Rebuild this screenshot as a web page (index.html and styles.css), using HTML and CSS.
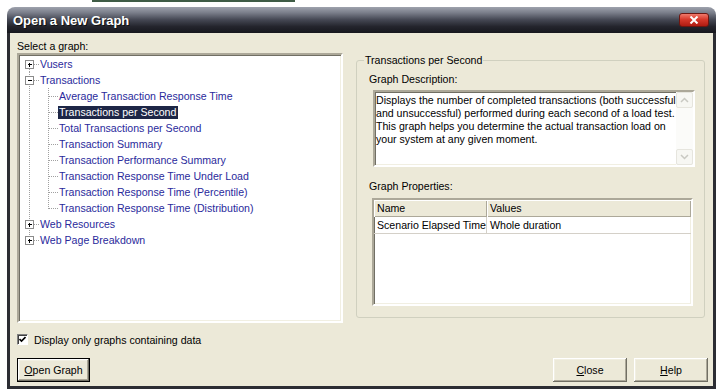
FILE: index.html
```html
<!DOCTYPE html>
<html>
<head>
<meta charset="utf-8">
<title>Open a New Graph</title>
<link rel="stylesheet" href="styles.css">
</head>
<body>
<svg class="defs" width="0" height="0" aria-hidden="true">
  <defs>
    <symbol id="pipe" viewBox="0 0 19 16"><line class="dl" x1="9.5" y1="0" x2="9.5" y2="16"/></symbol>
    <symbol id="tee" viewBox="0 0 19 16"><line class="dl" x1="9.5" y1="0" x2="9.5" y2="16"/><line class="dl" x1="10" y1="8.5" x2="19" y2="8.5"/></symbol>
    <symbol id="corner" viewBox="0 0 19 16"><line class="dl" x1="9.5" y1="0" x2="9.5" y2="9"/><line class="dl" x1="10" y1="8.5" x2="19" y2="8.5"/></symbol>
    <symbol id="first-plus" viewBox="0 0 19 16"><line class="dl" x1="9.5" y1="9" x2="9.5" y2="16"/><line class="dl" x1="10" y1="8.5" x2="19" y2="8.5"/><rect class="box" x="5.5" y="4.5" width="8" height="8"/><path class="sign" d="M7.5 8.5h4M9.5 6.5v4"/></symbol>
    <symbol id="tee-minus" viewBox="0 0 19 16"><line class="dl" x1="9.5" y1="0" x2="9.5" y2="16"/><line class="dl" x1="10" y1="8.5" x2="19" y2="8.5"/><rect class="box" x="5.5" y="4.5" width="8" height="8"/><path class="sign" d="M7.5 8.5h4"/></symbol>
    <symbol id="tee-plus" viewBox="0 0 19 16"><line class="dl" x1="9.5" y1="0" x2="9.5" y2="16"/><line class="dl" x1="10" y1="8.5" x2="19" y2="8.5"/><rect class="box" x="5.5" y="4.5" width="8" height="8"/><path class="sign" d="M7.5 8.5h4M9.5 6.5v4"/></symbol>
    <symbol id="corner-plus" viewBox="0 0 19 16"><line class="dl" x1="9.5" y1="0" x2="9.5" y2="9"/><line class="dl" x1="10" y1="8.5" x2="19" y2="8.5"/><rect class="box" x="5.5" y="4.5" width="8" height="8"/><path class="sign" d="M7.5 8.5h4M9.5 6.5v4"/></symbol>
  </defs>
</svg>
<div class="strip"><div class="strip-line"></div></div>
<div class="window">
  <div class="titlebar">
    <span class="title">Open a New Graph</span>
    <span class="close-x"><svg width="10" height="8" viewBox="0 0 10 8"><path d="M1.5 0.5l7 7M8.5 0.5l-7 7" stroke="#fff" stroke-width="2"/></svg></span>
  </div>
  <div class="client">
    <div class="main">
      <div class="left">
        <div class="lbl">Select a graph:</div>
        <div class="tree">
          <div class="row"><svg class="g"><use href="#first-plus"/></svg><span class="item">Vusers</span></div>
          <div class="row"><svg class="g"><use href="#tee-minus"/></svg><span class="item">Transactions</span></div>
          <div class="row"><svg class="g"><use href="#pipe"/></svg><svg class="g"><use href="#tee"/></svg><span class="item">Average Transaction Response Time</span></div>
          <div class="row"><svg class="g"><use href="#pipe"/></svg><svg class="g"><use href="#tee"/></svg><span class="item selected">Transactions per Second</span></div>
          <div class="row"><svg class="g"><use href="#pipe"/></svg><svg class="g"><use href="#tee"/></svg><span class="item">Total Transactions per Second</span></div>
          <div class="row"><svg class="g"><use href="#pipe"/></svg><svg class="g"><use href="#tee"/></svg><span class="item">Transaction Summary</span></div>
          <div class="row"><svg class="g"><use href="#pipe"/></svg><svg class="g"><use href="#tee"/></svg><span class="item">Transaction Performance Summary</span></div>
          <div class="row"><svg class="g"><use href="#pipe"/></svg><svg class="g"><use href="#tee"/></svg><span class="item">Transaction Response Time Under Load</span></div>
          <div class="row"><svg class="g"><use href="#pipe"/></svg><svg class="g"><use href="#tee"/></svg><span class="item">Transaction Response Time (Percentile)</span></div>
          <div class="row"><svg class="g"><use href="#pipe"/></svg><svg class="g"><use href="#corner"/></svg><span class="item">Transaction Response Time (Distribution)</span></div>
          <div class="row"><svg class="g"><use href="#tee-plus"/></svg><span class="item">Web Resources</span></div>
          <div class="row"><svg class="g"><use href="#corner-plus"/></svg><span class="item">Web Page Breakdown</span></div>
        </div>
      </div>
      <fieldset class="group">
        <legend>Transactions per Second</legend>
        <div class="group-body">
          <div class="lbl">Graph Description:</div>
          <div class="desc">
            <div class="desc-text">Displays the number of completed transactions (both successful<br>and unsuccessful) performed during each second of a load test.<br>This graph helps you determine the actual transaction load on<br>your system at any given moment.</div>
            <div class="vscroll">
              <span class="sbtn"><svg width="9" height="6" viewBox="0 0 9 6"><path d="M1 5l3.5-3.5L8 5" fill="none" stroke="#c9c9c2" stroke-width="1.5"/></svg></span>
              <span class="sbtn"><svg width="9" height="6" viewBox="0 0 9 6"><path d="M1 1l3.5 3.5L8 1" fill="none" stroke="#c9c9c2" stroke-width="1.5"/></svg></span>
            </div>
          </div>
          <div class="lbl props-lbl">Graph Properties:</div>
          <div class="grid">
            <div class="grow head"><span class="c1 hcell">Name</span><span class="c2 hcell">Values</span></div>
            <div class="grow data"><span class="c1 dcell">Scenario Elapsed Time</span><span class="c2 dcell">Whole duration</span></div>
          </div>
        </div>
      </fieldset>
    </div>
    <div class="check-row">
      <span class="checkbox"><svg width="7" height="7" viewBox="0 0 7 7"><path d="M0.5 3l2 2 4-4" fill="none" stroke="#000" stroke-width="1.6"/></svg></span>
      <span>Display only graphs containing data</span>
    </div>
    <div class="buttons">
      <button class="btn default"><u>O</u>pen Graph</button>
      <button class="btn push-right"><u>C</u>lose</button>
      <button class="btn"><u>H</u>elp</button>
    </div>
  </div>
</div>
</body>
</html>
```
FILE: styles.css
```css
* { box-sizing: border-box; }
body {
  margin: 0;
  background: #fff;
  font-family: "Liberation Sans", Arial, sans-serif;
  font-size: 10.6px;
  color: #000;
}
.defs { position: absolute; width: 0; height: 0; overflow: hidden; }
.strip { height: 7px; }
.strip-line { margin-left: 92px; width: 203px; height: 2px; background: #3f5c46; }

.window { margin-left: 7px; width: 709px; }
.titlebar {
  height: 26px;
  border-radius: 8px 8px 0 0;
  background: linear-gradient(to bottom, #9ea2ad 0%, #7a7e8a 22%, #464955 48%, #24252d 75%, #16171d 100%);
  display: flex;
  align-items: center;
  padding: 0 7px 0 6px;
}
.title {
  flex: 1;
  color: #fff;
  font-weight: bold;
  font-size: 13px;
  padding-top: 1px;
  text-shadow: 1px 1px 0 #111;
}
.close-x {
  width: 30px;
  height: 14px;
  border-radius: 3px;
  border: 1px solid #6e1610;
  background: linear-gradient(to bottom, #f07a6c 0%, #d7392b 45%, #b01c12 100%);
  display: flex;
  align-items: center;
  justify-content: center;
}
.close-x svg { display: block; }

.client {
  height: 356px;
  background: #ece9d8;
  border: 3px solid #2c2d33;
  border-top: 0;
  padding: 7px 5px 0 7px;
  display: flex;
  flex-direction: column;
}
.main { display: flex; align-items: flex-start; }
.left { width: 326px; display: flex; flex-direction: column; }
.lbl { line-height: 13px; height: 13px; white-space: nowrap; }

.sunken {
}
.tree, .desc, .grid {
  background: #fff;
  border: 2px solid;
  border-color: #aca899 #fff #fff #aca899;
  box-shadow: inset 1px 1px 0 #716f64, inset -1px -1px 0 #f1efe2;
}
.tree {
  height: 270px;
  padding: 1px 0 0 1px;
}
.row { display: flex; align-items: center; height: 16px; }
.g { width: 19px; height: 16px; display: block; flex: none; }
.dl { stroke: #a0a0a0; stroke-width: 1; stroke-dasharray: 1 1; shape-rendering: crispEdges; }
.box { fill: #fff; stroke: #8b8b8b; stroke-width: 1; shape-rendering: crispEdges; }
.sign { stroke: #000; stroke-width: 1; fill: none; shape-rendering: crispEdges; }
.item {
  color: #2a2a9c;
  line-height: 13px;
  height: 13px;
  padding: 0 2px 0 1px;
  white-space: nowrap;
}
.item.selected { background: #1d2646; color: #fff; }

.group {
  margin: 14px 0 0 13px;
  padding: 0 0 0 7px;
  width: 349px;
  height: 264px;
  border: 1px solid #d0d0bf;
  border-radius: 3px;
  min-width: 0;
}
.group legend {
  padding: 0 1px;
  line-height: 13px;
  font-size: 10.6px;
}
.group-body { padding: 6px 0 0 5px; }
.desc {
  margin: 4px 0 0 4px;
  width: 322px;
  height: 77px;
  display: flex;
}
.desc-text {
  flex: 1;
  padding: 2px 0 0 1px;
  line-height: 13px;
  white-space: nowrap;
  overflow: hidden;
}
.vscroll {
  width: 17px;
  display: flex;
  flex-direction: column;
  justify-content: space-between;
  background: #fbfbf9;
}
.sbtn {
  width: 17px;
  height: 16px;
  border: 1px solid #e6e5de;
  border-radius: 2px;
  background: #f7f7f3;
  display: flex;
  align-items: center;
  justify-content: center;
}
.props-lbl { margin-top: 13px; }
.grid {
  margin: 5px 0 0 3px;
  width: 321px;
  height: 108px;
}
.grow { display: flex; height: 17px; }
.c1 { width: 113px; }
.c2 { flex: 1; }
.hcell, .dcell {
  line-height: 16px;
  padding-left: 3px;
  white-space: nowrap;
}
.hcell {
  background: #ece9d8;
  box-shadow: inset 1px 1px 0 #fff, inset -1px -1px 0 #aca899;
  line-height: 17px;
}
.dcell {
  border-bottom: 1px solid #d4d0c8;
}
.data .c1 { border-right: 1px solid #d4d0c8; }

.check-row {
  margin-top: 10px;
  height: 13px;
  display: flex;
  align-items: center;
  gap: 6px;
}
.checkbox {
  width: 11px;
  height: 11px;
  background: #fff;
  border: 1px solid;
  border-color: #808080 #fff #fff #808080;
  box-shadow: inset 1px 1px 0 #404040;
  display: flex;
  align-items: center;
  justify-content: center;
}
.checkbox svg { display: block; }

.buttons { margin-top: 12px; display: flex; }
.btn {
  font-family: inherit;
  font-size: 10.6px;
  color: #000;
  width: 74px;
  height: 24px;
  padding: 0;
  border: 0;
  background: #ece9d8;
  box-shadow: inset -1px -1px 0 #716f64, inset 1px 1px 0 #fff, inset -2px -2px 0 #aca899, inset 2px 2px 0 #f1efe2;
}
.btn.default {
  width: 73px;
  border: 1px solid #000;
}
.push-right { margin-left: auto; margin-right: 7px; }
```
